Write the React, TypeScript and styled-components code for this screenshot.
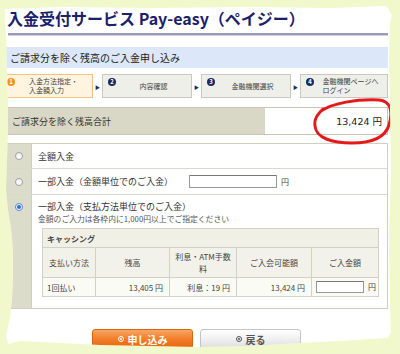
import { Fragment } from "react";
import styled, { createGlobalStyle } from "styled-components";

const GlobalStyle = createGlobalStyle`
  html, body {
    margin: 0;
    padding: 0;
    background: #f1f8cb;
  }
  body {
    font-family: "Noto Sans CJK JP", "Noto Sans", sans-serif;
    color: #333;
  }
  * {
    box-sizing: border-box;
  }
`;

const Paper = styled.div`
  position: relative;
  width: 400px;
  height: 354px;
  padding: 8px 12px 0 5px;
  display: flex;
  flex-direction: column;
  background: #fff;
  overflow: hidden;
  clip-path: polygon(
    5px 9px, 60px 7px, 150px 8px, 250px 7px, 330px 8px, 386px 6px,
    389px 10px, 392px 16px, 390px 22px, 389px 60px, 390px 110px,
    391px 170px, 389px 240px, 390px 300px, 391px 332px, 388px 338px,
    340px 341px, 300px 343px, 250px 346px, 200px 347px, 150px 346px,
    100px 345px, 60px 343px, 20px 341px, 8px 344px, 6px 336px,
    10px 318px, 12px 300px, 13px 280px, 13px 250px, 11px 228px,
    8px 210px, 6px 190px, 7px 160px, 8px 130px, 8px 100px, 7px 70px,
    6px 40px, 5px 20px
  );
`;

const Title = styled.h1`
  margin: 0;
  padding-left: 2px;
  height: 20px;
  font-size: 16px;
  line-height: 20px;
  font-weight: 700;
  color: #1c1f6c;
  white-space: nowrap;
`;

const Rule = styled.div`
  margin: 5px 0 0 3px;
  border-top: 2px solid #9a9ab8;
  border-bottom: 1px solid #d0d0e0;
`;

const SectionBar = styled.h2`
  margin: 11px 0 0;
  height: 21px;
  padding-left: 5px;
  background: #dce8f9;
  font-size: 10px;
  line-height: 21px;
  font-weight: 400;
  color: #222;
`;

const Steps = styled.div`
  margin: 6px 0 0 -4px;
  height: 24px;
  display: grid;
  grid-template-columns: 92px 9px 90px 9px 90px 9px 88px;
  align-items: stretch;
`;

const Step = styled.div<{ $current?: boolean }>`
  display: flex;
  align-items: flex-start;
  padding: 3px 0 0 5px;
  background: ${({ $current }) => ($current ? "#fff4e0" : "#efefea")};
  border: 1px solid ${({ $current }) => ($current ? "#f3c27c" : "#c9c9bf")};
`;

const StepNo = styled.span<{ $current?: boolean }>`
  flex: none;
  width: 8px;
  height: 8px;
  border-radius: 50%;
  background: ${({ $current }) => ($current ? "#f29424" : "#1d2a5c")};
  color: #fff;
  font-size: 6px;
  line-height: 8px;
  font-weight: 700;
  text-align: center;
`;

const StepLabel = styled.div`
  flex: 1;
  align-self: stretch;
  display: flex;
  align-items: center;
  justify-content: center;
  margin-top: -3px;
  font-size: 7px;
  line-height: 9px;
  color: #444;
  white-space: nowrap;
`;

const StepArrow = styled.span`
  display: flex;
  align-items: center;
  justify-content: center;
  font-size: 5px;
  color: #1d2a5c;
`;

const TotalRow = styled.div`
  margin-top: 9px;
  height: 28px;
  display: grid;
  grid-template-columns: 258px 1fr;
  border: 1px solid #c6c6b4;
`;

const TotalLabel = styled.div`
  display: flex;
  align-items: center;
  padding-left: 6px;
  background: #d9d8c7;
  font-size: 9px;
  color: #333;
`;

const TotalValue = styled.div`
  display: flex;
  align-items: center;
  justify-content: flex-end;
  padding-right: 5px;
  border-left: 1px solid #d6d6c6;
  font-family: "DejaVu Sans", "Noto Sans CJK JP", sans-serif;
  font-size: 9.5px;
  color: #222;
`;

const Options = styled.div`
  margin-top: 8px;
  border: 1px solid #cfcfc0;
`;

const OptionRow = styled.div<{ $h?: number }>`
  display: grid;
  grid-template-columns: 26px 1fr;
  min-height: ${({ $h }) => ($h ? `${$h}px` : "auto")};
  &:not(:last-child) {
    border-bottom: 1px solid #d8d8cc;
  }
`;

const RadioCell = styled.div<{ $top?: number }>`
  display: flex;
  justify-content: center;
  align-items: ${({ $top }) => ($top ? "flex-start" : "center")};
  padding-top: ${({ $top }) => ($top ? `${$top}px` : "0")};
  background: #dcdccb;
  border-right: 1px solid #cfcfc0;
`;

const Radio = styled.span<{ $checked?: boolean }>`
  position: relative;
  width: 8px;
  height: 8px;
  border-radius: 50%;
  border: 1px solid ${({ $checked }) => ($checked ? "#5a8ad0" : "#a0a0a0")};
  background: linear-gradient(#f0f0f0, #fff);
  &::after {
    content: "";
    display: ${({ $checked }) => ($checked ? "block" : "none")};
    position: absolute;
    left: 1px;
    top: 1px;
    width: 4px;
    height: 4px;
    border-radius: 50%;
    background: #2d6be0;
  }
`;

const OptionBody = styled.div`
  display: flex;
  align-items: center;
  padding-left: 6px;
  font-size: 9px;
  color: #333;
`;

const OptionDetail = styled.div`
  padding: 6px 10px 11px 6px;
  font-size: 9px;
  color: #333;
`;

const Line = styled.div`
  height: 12px;
  line-height: 12px;
`;

const Note = styled.div`
  height: 12px;
  line-height: 12px;
  font-size: 7.8px;
  color: #555;
`;

const AmountInput = styled.span<{ $w: number; $gap?: number }>`
  display: inline-block;
  width: ${({ $w }) => $w}px;
  height: 13px;
  margin-left: ${({ $gap }) => $gap ?? 0}px;
  border: 1px solid #999;
  border-top-color: #777;
  background: #fff;
  border-radius: 1px;
`;

const Yen = styled.span`
  margin-left: 4px;
  font-size: 8px;
  color: #444;
`;

const BreakTable = styled.table`
  margin: 3px 0 0 4px;
  width: 336px;
  table-layout: fixed;
  border-collapse: collapse;
  font-size: 8px;
  color: #444;
`;

const Caption = styled.td`
  height: 19px;
  padding-left: 4px;
  background: #f1f0e6;
  border: 1px solid #d2d2c4;
  font-weight: 700;
  color: #444;
`;

const Th = styled.th`
  height: 30px;
  padding: 0 2px;
  background: #f3f2ea;
  border: 1px solid #d2d2c4;
  font-weight: 400;
  line-height: 12px;
  text-align: center;
`;

const Td = styled.td<{ $align?: "left" | "right" }>`
  height: 19px;
  padding: ${({ $align }) => ($align === "left" ? "0 0 0 4px" : "0 6px 0 0")};
  background: #fbfbf6;
  border: 1px solid #d2d2c4;
  text-align: ${({ $align }) => $align ?? "right"};
  white-space: nowrap;
`;

const InputCell = styled.td`
  height: 19px;
  padding: 0 0 0 4px;
  background: #fbfbf6;
  border: 1px solid #d2d2c4;
  white-space: nowrap;
  span:first-child {
    vertical-align: middle;
    height: 12px;
  }
`;

const Actions = styled.div`
  margin-top: 20px;
  display: flex;
  justify-content: center;
  gap: 7px;
`;

const Button = styled.button<{ $primary?: boolean }>`
  width: 101px;
  height: 20px;
  display: flex;
  align-items: center;
  justify-content: center;
  gap: 4px;
  padding: 0;
  border-radius: 3px;
  border: 1px solid ${({ $primary }) => ($primary ? "#d8660f" : "#c4c4c4")};
  background: ${({ $primary }) =>
    $primary
      ? "linear-gradient(#f9a765, #f27d2a 50%, #e8650e)"
      : "linear-gradient(#ffffff, #f0f0f0 50%, #dedede)"};
  color: ${({ $primary }) => ($primary ? "#fff" : "#555")};
  font-family: inherit;
  font-size: 10px;
  font-weight: 700;
  box-shadow: 0 1px 1px rgba(0, 0, 0, 0.15);
`;

const BtnMark = styled.span`
  position: relative;
  width: 6px;
  height: 6px;
  border-radius: 50%;
  border: 1px solid currentColor;
  &::after {
    content: "";
    position: absolute;
    left: 1px;
    top: 1px;
    width: 2px;
    height: 2px;
    border-radius: 50%;
    background: currentColor;
  }
`;

const Scribble = styled.svg`
  position: absolute;
  left: 0;
  top: 0;
  pointer-events: none;
`;

const steps = [
  { no: "1", label: ["入金方法指定・", "入金額入力"] },
  { no: "2", label: ["内容確認"] },
  { no: "3", label: ["金融機関選択"] },
  { no: "4", label: ["金融機関ページへ", "ログイン"] },
];

export default function App() {
  return (
    <>
      <GlobalStyle />
      <Paper>
        <Title>入金受付サービス Pay-easy（ペイジー）</Title>
        <Rule />
        <SectionBar>ご請求分を除く残高のご入金申し込み</SectionBar>

        <Steps>
          {steps.map((s, i) => (
            <Fragment key={s.no}>
              {i > 0 && <StepArrow>▶</StepArrow>}
              <Step $current={i === 0}>
                <StepNo $current={i === 0}>{s.no}</StepNo>
                <StepLabel>
                  <div>
                    {s.label.map((l) => (
                      <div key={l}>{l}</div>
                    ))}
                  </div>
                </StepLabel>
              </Step>
            </Fragment>
          ))}
        </Steps>

        <TotalRow>
          <TotalLabel>ご請求分を除く残高合計</TotalLabel>
          <TotalValue>13,424 円</TotalValue>
        </TotalRow>

        <Options>
          <OptionRow $h={25}>
            <RadioCell>
              <Radio />
            </RadioCell>
            <OptionBody>全額入金</OptionBody>
          </OptionRow>
          <OptionRow $h={26}>
            <RadioCell>
              <Radio />
            </RadioCell>
            <OptionBody>
              一部入金（金額単位でのご入金）
              <AmountInput $w={88} $gap={16} />
              <Yen>円</Yen>
            </OptionBody>
          </OptionRow>
          <OptionRow>
            <RadioCell $top={8}>
              <Radio $checked />
            </RadioCell>
            <OptionDetail>
              <Line>一部入金（支払方法単位でのご入金）</Line>
              <Note>金額のご入力は各枠内に1,000円以上でご指定ください</Note>
              <BreakTable>
                <colgroup>
                  <col width={53} />
                  <col width={74} />
                  <col width={67} />
                  <col width={75} />
                  <col width={67} />
                </colgroup>
                <tbody>
                  <tr>
                    <Caption colSpan={5}>キャッシング</Caption>
                  </tr>
                  <tr>
                    <Th>支払い方法</Th>
                    <Th>残高</Th>
                    <Th>
                      利息・ATM手数
                      <br />料
                    </Th>
                    <Th>ご入会可能額</Th>
                    <Th>ご入金額</Th>
                  </tr>
                  <tr>
                    <Td $align="left">1回払い</Td>
                    <Td>13,405 円</Td>
                    <Td>利息：19 円</Td>
                    <Td>13,424 円</Td>
                    <InputCell>
                      <AmountInput $w={48} />
                      <Yen>円</Yen>
                    </InputCell>
                  </tr>
                </tbody>
              </BreakTable>
            </OptionDetail>
          </OptionRow>
        </Options>

        <Actions>
          <Button $primary>
            <BtnMark />
            申し込み
          </Button>
          <Button>
            <BtnMark />
            戻る
          </Button>
        </Actions>

        <Scribble width="400" height="354" viewBox="0 0 400 354">
          <path
            d="M321 111 C333 103 356 99 379 100 C391 101 393 112 389 125 C385 138 372 143 352 143 C332 143 316 138 315 126 C314 119 317 115 323 109"
            fill="none"
            stroke="#e41a1a"
            strokeWidth="3"
            strokeLinecap="round"
          />
        </Scribble>
      </Paper>
    </>
  );
}
